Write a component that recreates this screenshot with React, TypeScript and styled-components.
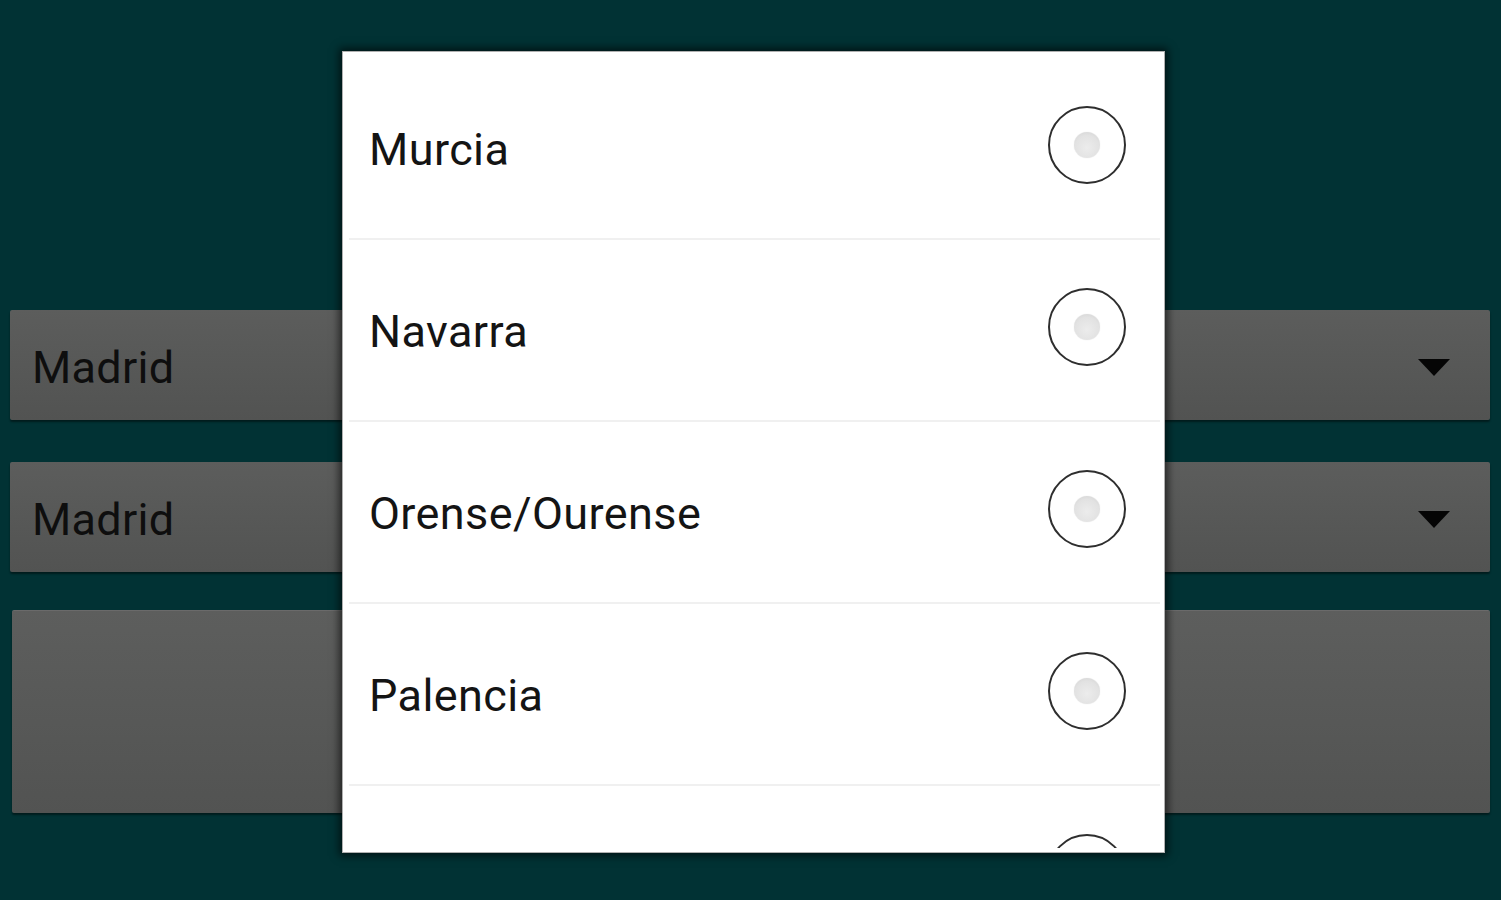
import React from "react";
import styled, { createGlobalStyle } from "styled-components";

const Global = createGlobalStyle`
  html, body { margin: 0; padding: 0; }
  body {
    background: #013234;
    font-family: Roboto, "Noto Sans", "Liberation Sans", sans-serif;
    width: 1501px;
    height: 900px;
    overflow: hidden;
  }
`;

const Screen = styled.div`
  position: relative;
  width: 1501px;
  height: 900px;
  background: #013234;
  box-sizing: border-box;
  padding: 310px 11px 0 10px;
  display: flex;
  flex-direction: column;
  gap: 42px;
`;

const Spinner = styled.div`
  height: 110px;
  box-sizing: border-box;
  background: linear-gradient(#5c5d5c, #525352);
  border-radius: 2px;
  box-shadow: 0 2px 2px rgba(0, 0, 0, 0.45);
  display: flex;
  align-items: center;
  justify-content: space-between;
  padding: 0 40px 0 22px;
`;

const SpinnerText = styled.span`
  font-size: 45px;
  color: #0e0e0e;
  line-height: 1;
  margin-top: 4px;
  letter-spacing: 0.3px;
`;

const Arrow = styled.span`
  width: 0;
  height: 0;
  border-left: 16px solid transparent;
  border-right: 16px solid transparent;
  border-top: 17px solid #050505;
  margin-top: 4px;
`;

const BigButton = styled.div`
  height: 202px;
  margin-top: -4px;
  margin-left: 2px;
  background: linear-gradient(#5d5e5d, #525352);
  border-radius: 2px;
  border-top: 1px solid #6a6a6a;
  box-shadow: 0 2px 2px rgba(0, 0, 0, 0.45);
`;

const Dialog = styled.div`
  position: absolute;
  left: 342px;
  top: 51px;
  width: 823px;
  height: 802px;
  box-sizing: border-box;
  background: #ffffff;
  border: 1px solid #b0b0b0;
  box-shadow: 0 0 8px 3px rgba(0, 0, 0, 0.6);
  padding: 6px 0 4px;
  overflow: hidden;
`;

const List = styled.div`
  height: 100%;
  overflow: hidden;
  display: flex;
  flex-direction: column;
`;

const Row = styled.div`
  flex: 0 0 182px;
  height: 182px;
  box-sizing: border-box;
  display: flex;
  align-items: center;
  justify-content: space-between;
  padding: 0 38px 0 26px;
  position: relative;
  &::after {
    content: "";
    position: absolute;
    left: 6px;
    right: 4px;
    bottom: 0;
    height: 2px;
    background: #f0f0f0;
  }
`;

const Label = styled.span`
  font-size: 45px;
  color: #141414;
  line-height: 1;
  letter-spacing: 0.4px;
`;

const Radio = styled.span`
  width: 78px;
  height: 78px;
  box-sizing: border-box;
  border-radius: 50%;
  border: 2.5px solid #2e2e2e;
  display: flex;
  align-items: center;
  justify-content: center;
  margin-top: -8px;
`;

const Dot = styled.span`
  width: 26px;
  height: 26px;
  border-radius: 50%;
  background: radial-gradient(circle at 50% 60%, #ececec 0%, #e2e2e2 60%, #cfcfcf 100%);
  box-shadow: 0 0 1px rgba(0, 0, 0, 0.15);
`;

const items = ["Murcia", "Navarra", "Orense/Ourense", "Palencia", ""];

export default function App() {
  return (
    <>
      <Global />
      <Screen>
        <Spinner>
          <SpinnerText>Madrid</SpinnerText>
          <Arrow />
        </Spinner>
        <Spinner>
          <SpinnerText>Madrid</SpinnerText>
          <Arrow />
        </Spinner>
        <BigButton />
        <Dialog>
          <List>
            {items.map((name, i) => (
              <Row key={i}>
                <Label>{name}</Label>
                <Radio>
                  <Dot />
                </Radio>
              </Row>
            ))}
          </List>
        </Dialog>
      </Screen>
    </>
  );
}
